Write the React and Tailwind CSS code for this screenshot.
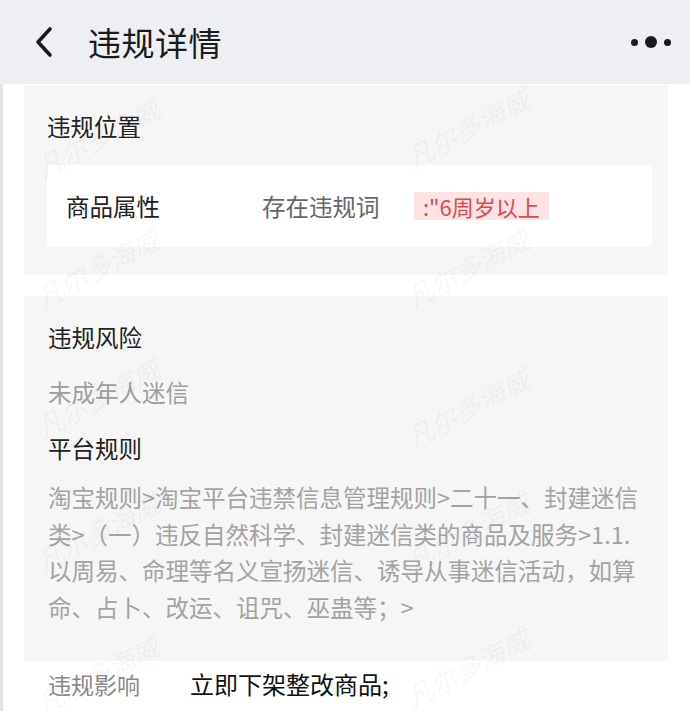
import React from 'react';

const marks = [
  [30, 118], [400, 108],
  [30, 248], [400, 248],
  [30, 378], [400, 388],
  [30, 512], [400, 512],
  [30, 655], [400, 648],
];

function Watermarks() {
  return (
    <div className="pointer-events-none absolute inset-0 overflow-hidden">
      {marks.map(([x, y], i) => (
        <div
          key={i}
          className="absolute text-[27px] italic text-black/[0.05] -rotate-[28deg] whitespace-nowrap"
          style={{ left: x, top: y }}
        >
          凡尔多海威
        </div>
      ))}
    </div>
  );
}

function Header() {
  return (
    <div className="h-[84px] bg-[#edeff2] flex items-center pl-[33px] pr-[19px]">
      <svg width="22" height="32" viewBox="0 0 22 32" fill="none">
        <path d="M17 3 L5 16 L17 29" stroke="#1a1a1a" strokeWidth="3.6" strokeLinecap="round" strokeLinejoin="round" />
      </svg>
      <div className="ml-[33px] text-[33px] leading-none text-[#1a1a1a] tracking-[0.5px]">违规详情</div>
      <div className="ml-auto flex items-center gap-[7px]">
        <span className="w-[7px] h-[7px] rounded-full bg-[#1a1a1a]" />
        <span className="w-[12px] h-[12px] rounded-full bg-[#1a1a1a]" />
        <span className="w-[7px] h-[7px] rounded-full bg-[#1a1a1a]" />
      </div>
    </div>
  );
}

export default function App() {
  const rules = [
    '淘宝规则>淘宝平台违禁信息管理规则>二十一、封建迷信',
    '类>（一）违反自然科学、封建迷信类的商品及服务>1.1.',
    '以周易、命理等名义宣扬迷信、诱导从事迷信活动，如算',
    '命、占卜、改运、诅咒、巫蛊等；>',
  ];

  return (
    <div
      className="relative w-[690px] h-[711px] overflow-hidden bg-white"
      style={{ fontFamily: '"Noto Sans CJK SC", "Noto Sans", sans-serif' }}
    >
      <Header />
      <div className="border-l-[3px] border-[#e2e6eb] pl-[21px] pr-[22px] pt-[1px] h-[627px]">
        <div className="bg-[#f6f6f6] pt-[25px] pb-[28px] pl-[23px] pr-[16px]">
          <div className="text-[23.5px] leading-[32px] text-[#222]">违规位置</div>
          <div className="mt-[23px] h-[82px] bg-white rounded-[4px] flex items-center pl-[19px] text-[23.5px] leading-[32px]">
            <div className="w-[196px] text-[#222]">商品属性</div>
            <div className="w-[152px] text-[#666]">存在违规词</div>
            <div className="h-[28px] px-[9px] flex items-center bg-[#fde3e3] text-[#dc4a4f] text-[22px]">:"6周岁以上</div>
          </div>
        </div>

        <div className="mt-[21px] bg-[#f6f6f6] pt-[25px] pb-[35px] pl-[24px] pr-[16px]">
          <div className="text-[23.5px] leading-[32px] text-[#222]">违规风险</div>
          <div className="mt-[23px] text-[23.5px] leading-[32px] text-[#9e9e9e]">未成年人迷信</div>
          <div className="mt-[24px] text-[23.5px] leading-[32px] text-[#222]">平台规则</div>
          <div className="mt-[15px] text-[23.5px] leading-[36.7px] text-[#a3a3a3]">
            {rules.map((line, i) => (
              <div key={i} className="whitespace-nowrap">{line}</div>
            ))}
          </div>
        </div>

        <div className="flex items-center h-[46px] pl-[24px]">
          <div className="w-[142px] text-[23px] text-[#8a8a8a]">违规影响</div>
          <div className="text-[24px] text-[#111]">立即下架整改商品;</div>
        </div>
      </div>
      <Watermarks />
    </div>
  );
}
